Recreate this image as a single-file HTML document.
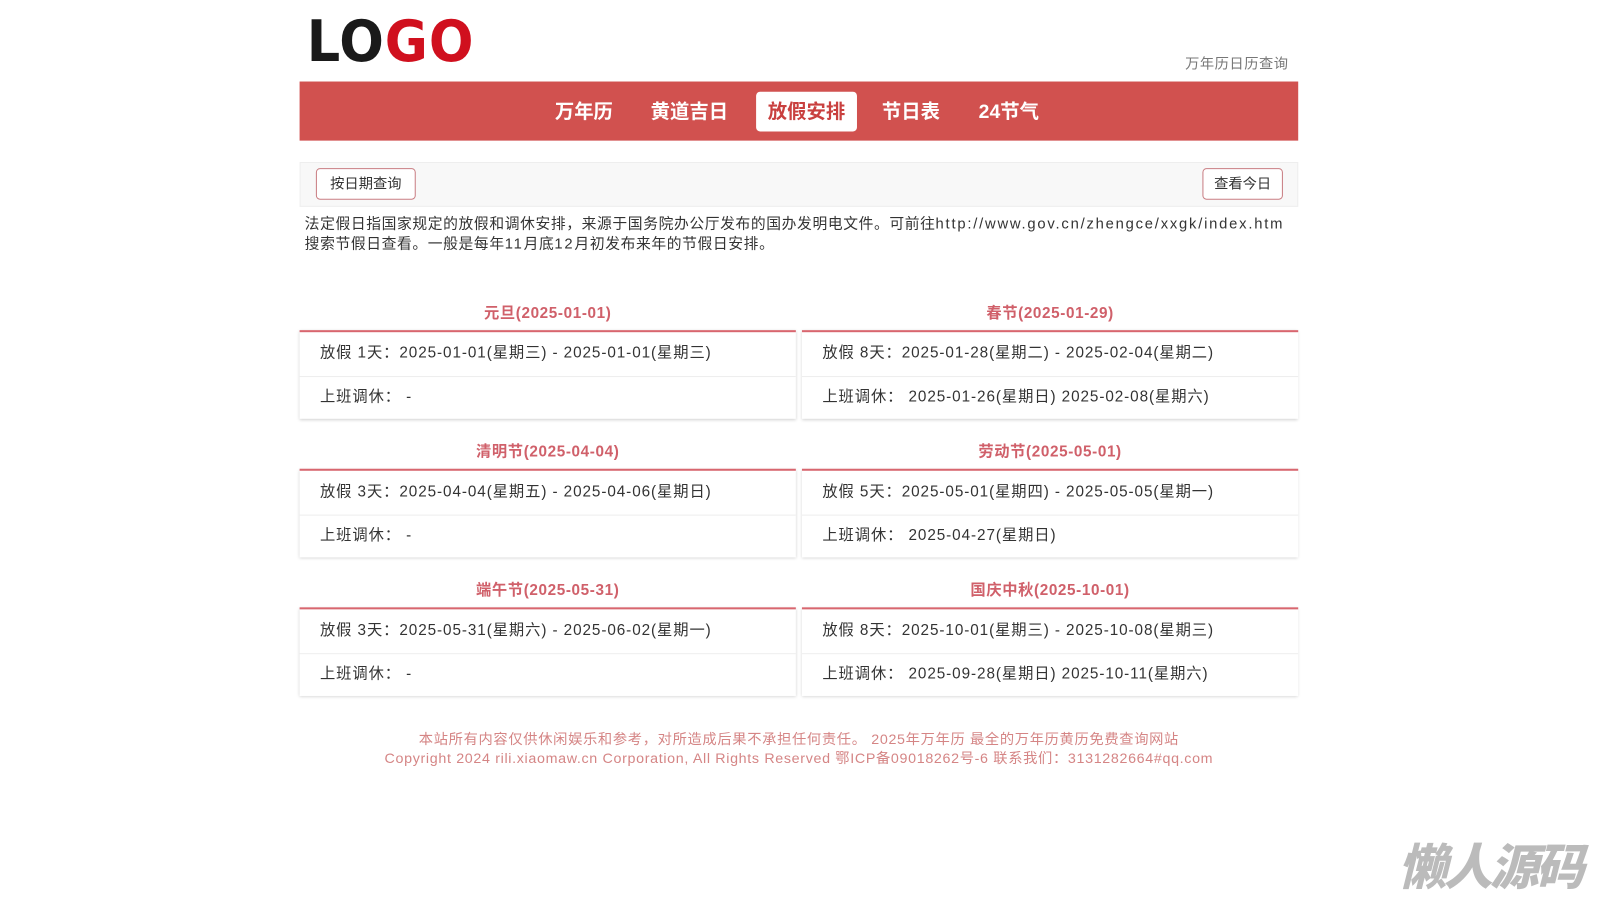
<!DOCTYPE html>
<html><head><meta charset="utf-8"><style>
*{margin:0;padding:0;box-sizing:border-box}
body{width:1600px;height:900px;background:#fff;font-family:"Liberation Sans","Noto Sans CJK SC",sans-serif;color:#333;position:relative;overflow:hidden}
#w{position:absolute;left:0;top:0;width:1570px;height:884px;transform:scale(1.019);transform-origin:0 0}
.a{position:absolute}
.logo{left:301px;top:12px;font:bold 56px/60px "DejaVu Sans","Liberation Sans",sans-serif;letter-spacing:1px;color:#1a1a1a;transform:scaleX(0.92);transform-origin:0 0}
.logo span{color:#d0101e}
.sub{left:1163px;top:52px;font-size:14px;letter-spacing:0.5px;color:#777;white-space:nowrap}
.nav{left:294px;top:80px;width:980px;height:58px;background:#d1514f}
.nav div{position:absolute;top:10px;height:39px;line-height:42px;font-size:19px;font-weight:bold;color:#fff;text-align:center}
.nav .on{background:#fff;color:#c9403f;border-radius:4px}
.bar{left:294px;top:159px;width:980px;height:44px;background:#f8f8f8;border:1px solid #eee}
.btn{position:absolute;top:5px;height:31px;line-height:29px;border:1px solid #c97d82;border-radius:4px;background:#fff;font-size:14px;text-align:center;color:#333}
.desc{left:299px;top:210px;width:1000px;font-size:14.5px;line-height:20px;color:#333;white-space:nowrap;letter-spacing:0.6px}
.desc u{text-decoration:none;letter-spacing:1.75px}
.t{width:487px;text-align:center;font-size:15px;font-weight:bold;color:#d0606a;letter-spacing:0.6px}
.card{width:487px;height:87px;border-top:2px solid #d8666f;box-shadow:0 1px 3px rgba(0,0,0,.18);background:#fff}
.card div{height:43px;line-height:42px;padding-left:20px;font-size:15px;color:#333;letter-spacing:0.9px;white-space:nowrap}
.card div+div{border-top:1px solid #eee;line-height:40px}
.ft{left:194px;width:1180px;text-align:center;font-size:14px;color:#d58585;letter-spacing:0.65px;white-space:nowrap}
.wm{left:1372px;top:812px;font-size:48px;font-weight:900;font-style:italic;color:#bbb;font-family:"Noto Sans CJK SC",sans-serif;letter-spacing:-3px;white-space:nowrap}
</style></head><body><div id="w">
<div class="a logo">LO<span>GO</span></div>
<div class="a sub">万年历日历查询</div>
<div class="a nav">
<div style="left:244px;width:70px">万年历</div>
<div style="left:340px;width:85px">黄道吉日</div>
<div class="on" style="left:448px;width:99px">放假安排</div>
<div style="left:568px;width:64px">节日表</div>
<div style="left:664px;width:64px">24节气</div>
</div>
<div class="a bar"><div class="btn" style="left:15px;width:98px">按日期查询</div><div class="btn" style="left:885px;width:79px">查看今日</div></div>
<div class="a desc">法定假日指国家规定的放假和调休安排，来源于国务院办公厅发布的国办发明电文件。可前往<u>http://www.gov.cn/zhengce/xxgk/index.htm</u><br>搜索节假日查看。一般是每年<u>11</u>月底<u>12</u>月初发布来年的节假日安排。</div>

<div class="a t" style="left:294px;top:296px">元旦(2025-01-01)</div>
<div class="a card" style="left:294px;top:324px"><div>放假 1天：2025-01-01(星期三) - 2025-01-01(星期三)</div><div>上班调休： -</div></div>
<div class="a t" style="left:787px;top:296px">春节(2025-01-29)</div>
<div class="a card" style="left:787px;top:324px"><div>放假 8天：2025-01-28(星期二) - 2025-02-04(星期二)</div><div>上班调休： 2025-01-26(星期日) 2025-02-08(星期六)</div></div>

<div class="a t" style="left:294px;top:432px">清明节(2025-04-04)</div>
<div class="a card" style="left:294px;top:460px"><div>放假 3天：2025-04-04(星期五) - 2025-04-06(星期日)</div><div>上班调休： -</div></div>
<div class="a t" style="left:787px;top:432px">劳动节(2025-05-01)</div>
<div class="a card" style="left:787px;top:460px"><div>放假 5天：2025-05-01(星期四) - 2025-05-05(星期一)</div><div>上班调休： 2025-04-27(星期日)</div></div>

<div class="a t" style="left:294px;top:568px">端午节(2025-05-31)</div>
<div class="a card" style="left:294px;top:596px"><div>放假 3天：2025-05-31(星期六) - 2025-06-02(星期一)</div><div>上班调休： -</div></div>
<div class="a t" style="left:787px;top:568px">国庆中秋(2025-10-01)</div>
<div class="a card" style="left:787px;top:596px"><div>放假 8天：2025-10-01(星期三) - 2025-10-08(星期三)</div><div>上班调休： 2025-09-28(星期日) 2025-10-11(星期六)</div></div>

<div class="a ft" style="top:715px">本站所有内容仅供休闲娱乐和参考，对所造成后果不承担任何责任。 2025年万年历 最全的万年历黄历免费查询网站</div>
<div class="a ft" style="top:734px">Copyright 2024 rili.xiaomaw.cn Corporation, All Rights Reserved 鄂ICP备09018262号-6 联系我们：3131282664#qq.com</div>
<div class="a wm">懒人源码</div>
</div></body></html>
